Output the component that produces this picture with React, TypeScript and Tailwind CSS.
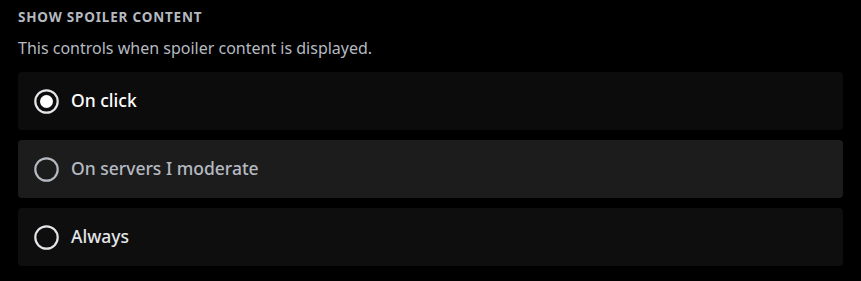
import React from "react";

const options = [
  { label: "On click", selected: true, bg: "bg-[#0c0c0d]", text: "text-white" },
  { label: "On servers I moderate", selected: false, bg: "bg-[#1c1c1d]", text: "text-[#b5bac1]" },
  { label: "Always", selected: false, bg: "bg-[#0e0e0f]", text: "text-[#e3e5e8]" },
];

function Radio({ selected, muted }: { selected: boolean; muted: boolean }) {
  return (
    <svg width="25" height="25" viewBox="0 0 25 25" className="shrink-0">
      <circle cx="12.5" cy="12.5" r="11.2" fill="none" stroke={muted ? "#b5bac1" : "#e3e5e8"} strokeWidth="2.2" />
      {selected && <circle cx="12.5" cy="12.5" r="6.5" fill="#ffffff" />}
    </svg>
  );
}

export default function App() {
  return (
    <div className="w-[861px] h-[281px] bg-black px-[18px] pt-[9px]" style={{ fontFamily: '"Noto Sans", sans-serif' }}>
      <div className="text-[13.5px] font-bold uppercase tracking-[0.8px] text-[#b5bac1] leading-[17px]">Show spoiler content</div>
      <div className="mt-[12px] text-[16px] text-[#b5bac1] leading-[20px]">This controls when spoiler content is displayed.</div>
      <div className="mt-[14px] flex flex-col gap-[10px] w-[825px]">
        {options.map((o, i) => (
          <div key={i} className={`h-[58px] rounded-[4px] flex items-center pl-[16px] gap-[12px] ${o.bg}`}>
            <Radio selected={o.selected} muted={i === 1} />
            <span className={`text-[17.5px] font-medium leading-[22px] pb-[2px] ${o.text}`}>{o.label}</span>
          </div>
        ))}
      </div>
    </div>
  );
}
